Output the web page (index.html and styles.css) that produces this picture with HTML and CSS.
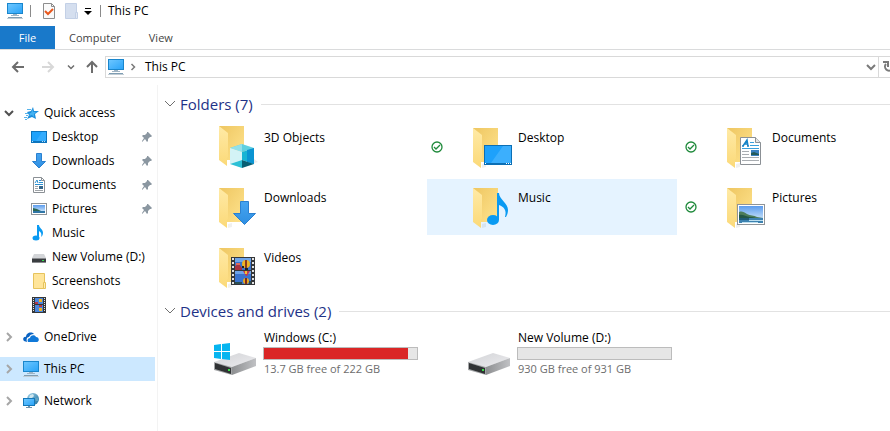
FILE: index.html
```
<!DOCTYPE html>
<html lang="en">

<head>
  <meta charset="UTF-8">
  <meta name="viewport" content="width=device-width, initial-scale=1.0">
  <title>This PC</title>
  <link rel="stylesheet" href="styles.css">
</head>

<body>
  <!-- shared icons -->
  <svg class="sprite" aria-hidden="true">
    <defs>
      <linearGradient id="screen" x1="0" y1="0" x2="1" y2="1">
        <stop offset="0" stop-color="#6cc6ff" />
        <stop offset="1" stop-color="#2ba4f8" />
      </linearGradient>
      <linearGradient id="folderBack" x1="0" y1="0" x2="1" y2="1">
        <stop offset="0" stop-color="#eec661" />
        <stop offset="1" stop-color="#ffe48f" />
      </linearGradient>
      <linearGradient id="folderFront" x1="0" y1="0" x2="0" y2="1">
        <stop offset="0" stop-color="#ffeaa6" />
        <stop offset="1" stop-color="#fbd978" />
      </linearGradient>
      <linearGradient id="sky" x1="0" y1="0" x2="0" y2="1">
        <stop offset="0" stop-color="#5b9cee" />
        <stop offset="1" stop-color="#e6f5fd" />
      </linearGradient>
      <linearGradient id="arrowFill" x1="0" y1="0" x2="0" y2="1">
        <stop offset="0" stop-color="#45a4f0" />
        <stop offset="1" stop-color="#2f8fe2" />
      </linearGradient>
      <linearGradient id="driveTop" x1="0" y1="0" x2="1" y2="1">
        <stop offset="0" stop-color="#d2d3d6" />
        <stop offset="1" stop-color="#ececef" />
      </linearGradient>
      <linearGradient id="driveSide" x1="0" y1="0" x2="1" y2="0">
        <stop offset="0" stop-color="#8d8f91" />
        <stop offset="1" stop-color="#c0c1c4" />
      </linearGradient>
      <linearGradient id="globe" x1="0" y1="0" x2="1" y2="1">
        <stop offset="0" stop-color="#9ccfe6" />
        <stop offset="1" stop-color="#1d6f9e" />
      </linearGradient>
    </defs>

    <symbol id="i-pc" viewBox="0 0 16 16">
      <path fill="#1a86cc" d="M0 0h16v11H0z" />
      <path fill="url(#screen)" d="M1 1h14v9H1z" />
      <path fill="#9fb4c4" d="M6 11h4v2H6zM4 12h8v1H4z" />
      <path fill="#7e9db3" d="M1 14h14v1H1z" />
      <path fill="#c2cdd5" d="M0 15h16v1H0z" />
    </symbol>
    <symbol id="i-folder" viewBox="0 0 48 48">
      <path fill="#000" opacity=".06" d="M14 45l4-1v-4l-4 1z" />
      <path fill="url(#folderBack)" d="M5 5h25v34H12z" />
      <path fill="url(#folderFront)" d="M5 5l9 7v24l-1 1v8l-8-6z" />
    </symbol>
    <symbol id="i-3d" viewBox="0 0 48 48">
      <path fill="url(#folderBack)" d="M5 3h25v34H12z" />
      <path fill="url(#folderFront)" d="M5 3l9 7v24l-1 1v8l-8-6z" />
      <path fill="#000" opacity=".08" d="M38 41l6-2-4-3z" />
      <path fill="#5fd0e0" d="M28 21l12 4-12 4-12-4z" />
      <path fill="#93e0ea" d="M16 25l12-4v8z" />
      <path fill="#d3f3f6" d="M16 25l12 4v8l-12 4z" />
      <path fill="#17b4d4" d="M28 29l12-4v16l-12-4z" />
      <path fill="#0a94d2" d="M40 25v16l-7-2V27z" />
      <path fill="#2cc0d6" d="M28 37v8l-12-4z" />
      <path fill="#075f74" d="M28 37l12 4-12 4z" />
    </symbol>
    <symbol id="i-desktop" viewBox="0 0 48 48">
      <use href="#i-folder" />
      <path fill="#0b6fb5" d="M16 22h28v20H16z" />
      <path fill="#1da1fb" d="M17 23h26v17H17z" />
      <path fill="#52b9ff" opacity=".6" d="M35 23h8v17H23z" />
      <path fill="#fff" d="M17 40h1v1h-1zM38 40h1v1h-1zM40 40h1v1h-1zM42 40h1v1h-1z" />
    </symbol>
    <symbol id="i-photo" viewBox="0 0 28 21">
      <path fill="#8f9498" d="M0 0h28v21H0z" />
      <path fill="#fff" d="M1 1h26v19H1z" />
      <path fill="url(#sky)" d="M2 2h24v17H2z" />
      <path fill="#4d7d5a" d="M2 8c3-1 5 0 8 2s7 1 10 3l6 1v1H2z" />
      <path fill="#235746" d="M2 11c4-1 7 2 11 2s6 1 8 2H2z" />
      <path fill="#3d82b0" d="M2 14h24v5H2z" />
      <path fill="#bcdff0" d="M12 16h14v1H12zM5 18h16v1H5z" />
      <path fill="#1f5a75" d="M2 14h10v2H2z" />
    </symbol>
    <symbol id="i-documents" viewBox="0 0 48 48">
      <use href="#i-folder" />
      <path fill="#fff" stroke="#8b9095" d="M18.500 14.500h15l5 5v22h-20z" />
      <path fill="#e4e6e8" stroke="#8b9095" d="M33.500 14.500v5h5" />
      <path fill="none" stroke="#1583c7" stroke-width="1.500" d="M21 23l4-6 1 6M22 21h4M20 23h2M25 23h2" />
      <path fill="#3ba0dc" d="M28 19h4v1h-4zM28 22h9v1h-9zM20 25h17v1H20z" />
      <path fill="#a9adb1" d="M20 28h7v1h-7zM20 31h7v1h-7zM20 34h17v1H20zM20 37h17v1H20z" />
      <path fill="#3a80bf" d="M29 27h8v6h-8z" />
      <path fill="#245a58" d="M29 30l3-1 5 2v1h-8z" />
    </symbol>
    <symbol id="i-downloads" viewBox="0 0 48 48">
      <use href="#i-folder" />
      <path fill="url(#arrowFill)" stroke="#2a80d0" d="M26.500 18.500h8v12h7l-11 11-11-11h7z" />
    </symbol>
    <symbol id="i-music" viewBox="0 0 48 48">
      <use href="#i-folder" />
      <ellipse cx="25" cy="37" rx="6" ry="5" fill="#0a9af2" />
      <path fill="#0a9af2" d="M29 10h2c0 6 9 10 9 17 0 3-1 5-2 7h-1c2-7-1-10-6-12v15h-2z" />
    </symbol>
    <symbol id="i-pictures" viewBox="0 0 48 48">
      <use href="#i-folder" />
      <use href="#i-photo" x="15" y="21" width="28" height="21" />
    </symbol>
    <symbol id="i-film" viewBox="0 0 24 28">
      <path fill="#35373a" d="M0 0h24v28H0z" />
      <path stroke="#e2e3e4" stroke-width="2" stroke-dasharray="2 2" d="M2 1v26M22 1v26" />
      <path fill="#3a74cf" d="M4 1h16v12H4zM4 14h16v13H4z" />
      <path fill="#6fa4e8" d="M4 1h16v4H4zM4 14h16v3H4z" />
      <path fill="#a8323f" d="M4 9l4-2 3 4v2H4z" />
      <path fill="#e06a5b" d="M5 6h4v2H5z" />
      <circle cx="15" cy="7" r="4" fill="#f0b323" />
      <path fill="#8a3a24" d="M14 3h2v8h-2z" />
      <path fill="#222" d="M14 11h3v2h-3zM11 9h2v2h-2z" />
      <path fill="#c33b52" d="M12 14h7l-3 5h-1z" />
      <path fill="#f2c330" d="M14 14h2v3h-2z" />
      <circle cx="15" cy="24" r="3" fill="#e8a91f" />
      <path fill="#7b2b21" d="M14 21h2v6h-2z" />
      <path fill="#2a4f55" d="M4 25h7v2H4zM18 24h2v3h-2z" />
    </symbol>
    <symbol id="i-videos" viewBox="0 0 48 48">
      <use href="#i-folder" />
      <use href="#i-film" x="17" y="14" width="24" height="28" />
    </symbol>
    <symbol id="i-drive" viewBox="0 0 48 48">
      <path fill="url(#driveTop)" d="M0 32l25-9 17 5-24 9z" />
      <path fill="url(#driveSide)" d="M18 37l24-9v8l-24 9z" />
      <path fill="#a4a6a8" d="M0 32l18 5v8L0 40z" />
      <path fill="#303234" d="M1 33l16 5v6L1 39z" />
      <path fill="#3be04a" d="M14 39h2v2h-2z" />
    </symbol>
    <symbol id="i-windrive" viewBox="0 0 48 48">
      <use href="#i-drive" />
      <path fill="#06b5f0" d="M0 15l7-1v7H0zM8 14l8-1v8H8zM0 22h7v7l-7-1zM8 22h8v8l-8-1z" />
    </symbol>

    <symbol id="s-star" viewBox="0 0 16 16">
      <path fill="#1c8fdc" d="M10 2l1 4 5 0-4 3 1 5-4-2-5 2 2-4-2-3 4-1z" />
      <path fill="#45b2f2" d="M10 4l0 3 3 0-2 2v3L9 10l-3 1 1-2-1-1h2z" />
      <path fill="#57b3ea" d="M4 4h4v1H4zM2 8h3v1H2zM3 10h2v1H3zM1 12h3v1H1zM2 14h2v1H2z" />
    </symbol>
    <symbol id="s-desktop" viewBox="0 0 16 16">
      <path fill="#0d74bd" d="M0 2h16v12H0z" />
      <path fill="#1fa2fb" d="M1 3h14v9H1z" />
      <path fill="#4cb5ff" d="M11 3h4v9H5z" opacity=".5" />
      <path fill="#b9e0f8" d="M1 12h1v1H1zM11 12h1v1h-1zM13 12h1v1h-1z" />
    </symbol>
    <symbol id="s-downloads" viewBox="0 0 16 16">
      <path fill="url(#arrowFill)" stroke="#2a80d0" d="M5.500 .5h5v8h4l-6.500 6.500L1.500 8.500h4z" />
    </symbol>
    <symbol id="s-documents" viewBox="0 0 16 16">
      <path fill="#fff" stroke="#8b9095" d="M2.500 .5h8l3 3v12h-11z" />
      <path fill="none" stroke="#8b9095" d="M10.500 .5v3h3" />
      <path fill="none" stroke="#2b90d2" d="M4 6l2-3 1 3" />
      <path fill="#2b90d2" d="M8 3h2v1H8zM8 5h4v1H8zM4 7h8v1H4z" />
      <path fill="#a0a4a8" d="M4 9h3v1H4zM4 11h3v1H4zM4 13h8v1H4z" />
      <path fill="#34658a" d="M8 9h4v3H8z" />
    </symbol>
    <symbol id="s-pictures" viewBox="0 0 16 16">
      <path fill="#8f9498" d="M0 2h16v12H0z" />
      <path fill="#fff" d="M1 3h14v10H1z" />
      <path fill="url(#sky)" d="M2 4h12v8H2z" />
      <path fill="#2b6652" d="M2 7l4 1 4 2 4 0v1H2z" />
      <path fill="#2f76a6" d="M2 10h12v2H2z" />
    </symbol>
    <symbol id="s-music" viewBox="0 0 16 16">
      <ellipse cx="5" cy="13" rx="3.500" ry="2.500" fill="#0a9af2" />
      <path fill="#0a9af2" d="M6 0h2c0 3 4 4 4 8 0 2-1 3-2 4 1-3 0-5-2-6v7H6z" />
    </symbol>
    <symbol id="s-drive" viewBox="0 0 16 16">
      <path fill="#d3d5d8" d="M3 5h10l2 4H1z" />
      <path fill="#3a3d40" d="M1 9h14v4H1z" />
      <path fill="#8a8c8f" d="M1 9h14v1H1zM1 13h14v1H1z" />
      <path fill="#33e24d" d="M11 11h2v1h-2z" />
    </symbol>
    <symbol id="s-folder" viewBox="0 0 16 16">
      <path fill="#ffe59a" stroke="#e6c35c" d="M2.500 .5h11v15h-11z" />
      <path fill="#ffedb5" stroke="#e6c35c" d="M12.500 9.500h2v6h-2z" />
    </symbol>
    <symbol id="s-videos" viewBox="0 0 16 16">
      <path fill="#35373a" d="M1 0h14v16H1z" />
      <path stroke="#e2e3e4" stroke-dasharray="1 1" d="M2.500 1v14M13.500 1v14" />
      <path fill="#4a86dc" d="M4 1h8v6H4zM4 8h8v7H4z" />
      <path fill="#f0b323" d="M8 2h3v3H8zM8 11h3v3H8z" />
      <path fill="#b5384a" d="M4 5h3v2H4zM8 8h3v2H8z" />
    </symbol>
    <symbol id="s-onedrive" viewBox="0 0 16 16">
      <path fill="#0a63c2" d="M1 12c-2-2 0-5 2-4 0-4 5-6 8-3-3 0-4 1-5 3-2 0-3 2-2 5z" />
      <path fill="#0f78d8" d="M5 13c-1-2 0-4 2-4 0-3 5-4 6-1 3 0 4 4 1 5z" />
    </symbol>
    <symbol id="s-network" viewBox="0 0 16 16">
      <circle cx="10" cy="6" r="6" fill="url(#globe)" />
      <path fill="#cfe6ee" d="M7 2l3-1 1 2-2 2-3 0z" />
      <path fill="#5fa3c4" d="M12 5l3 0 0 3-2 0z" />
      <path fill="#1478b9" d="M0 5h12v8H0z" />
      <path fill="url(#screen)" d="M1 6h10v6H1z" />
      <path fill="#6e93ac" d="M5 13h2v1H5zM3 14h6v1H3z" />
    </symbol>
    <symbol id="s-pin" viewBox="0 0 10 10">
      <path fill="#8b97a1" d="M6 0l4 4-1 1-1 0-2 2 0 2-1 1-2-3-3 3 0-1 2-3-2-2 1-1 2 0 2-2 0-1z" />
    </symbol>
    <symbol id="s-right" viewBox="0 0 8 10">
      <path fill="none" stroke="currentColor" stroke-width="2" d="M2 1l4 4-4 4" />
    </symbol>
    <symbol id="s-down" viewBox="0 0 10 8">
      <path fill="none" stroke="currentColor" stroke-width="2" d="M1 2l4 4 4-4" />
    </symbol>
    <symbol id="s-group" viewBox="0 0 12 8">
      <path fill="none" stroke="#6f6f6f" d="M1 1l5 5 5-5" />
    </symbol>
    <symbol id="s-back" viewBox="0 0 14 12">
      <path fill="none" stroke="currentColor" stroke-width="2" d="M13 6H2M7 1L2 6l5 5" />
    </symbol>
    <symbol id="s-synced" viewBox="0 0 12 12">
      <circle cx="6" cy="6" r="5" fill="#fff" stroke="#1f8a3b" stroke-width="1.300" />
      <path fill="none" stroke="#1f8a3b" stroke-width="1.300" d="M3 6l2 2 4-4" />
    </symbol>
  </svg>

  <header class="title-bar">
    <svg class="icon"><use href="#i-pc" /></svg>
    <span class="divider"></span>
    <button class="quick-button" aria-label="Properties">
      <svg class="icon" viewBox="0 0 16 16">
        <path fill="#fafafa" stroke="#8d8d8d" d="M2.500 .5h8l3 3v12h-11z" />
        <path fill="none" stroke="#8d8d8d" d="M10.500 .5v3h3" />
        <path fill="none" stroke="#e8571c" stroke-width="2" d="M4 8l3 3 5-5" />
      </svg>
    </button>
    <button class="quick-button" aria-label="New folder">
      <svg class="icon" viewBox="0 0 16 16">
        <path fill="#d5dfef" stroke="#c3d0e6" d="M2.500 .5h11v15h-11z" />
        <path fill="#e1e8f4" stroke="#c3d0e6" d="M12.500 9.500h2v6h-2z" />
      </svg>
    </button>
    <button class="quick-button quick-more" aria-label="Customize Quick Access Toolbar">
      <svg width="8" height="8" viewBox="0 0 8 8">
        <path d="M1 1h6v1H1zM0 4h8L4 8z" />
      </svg>
    </button>
    <span class="divider"></span>
    <h1>This PC</h1>
  </header>

  <nav class="tabs">
    <button class="tab active">File</button>
    <button class="tab">Computer</button>
    <button class="tab">View</button>
  </nav>

  <div class="nav-bar">
    <button class="nav-button" aria-label="Back"><svg width="14" height="12"><use href="#s-back" /></svg></button>
    <button class="nav-button forward" aria-label="Forward"><svg width="14" height="12" viewBox="0 0 14 12">
        <path fill="none" stroke="currentColor" stroke-width="2" d="M1 6h11M7 1l5 5-5 5" />
      </svg></button>
    <button class="nav-button recent" aria-label="Recent locations"><svg width="8" height="6"><use href="#s-down" /></svg></button>
    <button class="nav-button up" aria-label="Up"><svg width="12" height="14" viewBox="0 0 12 14">
        <path fill="none" stroke="currentColor" stroke-width="2" d="M6 13V2M1 7l5-5 5 5" />
      </svg></button>
    <div class="address">
      <svg class="icon"><use href="#i-pc" /></svg>
      <svg class="crumb-arrow" width="6" height="8"><use href="#s-right" /></svg>
      <button class="crumb">This PC</button>
      <button class="address-drop" aria-label="Previous locations"><svg width="10" height="8"><use href="#s-down" /></svg></button>
    </div>
    <button class="refresh" aria-label="Refresh">
      <svg width="12" height="12" viewBox="0 0 12 12">
        <path fill="none" stroke="currentColor" stroke-width="2" d="M3 3a4 4 0 1 0 6 0M0 1h5v5" />
      </svg>
    </button>
  </div>

  <div class="content">
    <aside class="sidebar">
      <div class="row">
        <button class="toggle open" aria-label="Collapse Quick access"><svg width="10" height="8"><use href="#s-down" /></svg></button>
        <a href="#"><svg class="icon"><use href="#s-star" /></svg>Quick access</a>
      </div>
      <div class="row child"><a href="#"><svg class="icon"><use href="#s-desktop" /></svg>Desktop</a><svg class="pin"><use href="#s-pin" /></svg></div>
      <div class="row child"><a href="#"><svg class="icon"><use href="#s-downloads" /></svg>Downloads</a><svg class="pin"><use href="#s-pin" /></svg></div>
      <div class="row child"><a href="#"><svg class="icon"><use href="#s-documents" /></svg>Documents</a><svg class="pin"><use href="#s-pin" /></svg></div>
      <div class="row child"><a href="#"><svg class="icon"><use href="#s-pictures" /></svg>Pictures</a><svg class="pin"><use href="#s-pin" /></svg></div>
      <div class="row child"><a href="#"><svg class="icon"><use href="#s-music" /></svg>Music</a></div>
      <div class="row child"><a href="#"><svg class="icon"><use href="#s-drive" /></svg>New Volume (D:)</a></div>
      <div class="row child"><a href="#"><svg class="icon"><use href="#s-folder" /></svg>Screenshots</a></div>
      <div class="row child"><a href="#"><svg class="icon"><use href="#s-videos" /></svg>Videos</a></div>

      <div class="row root">
        <button class="toggle" aria-label="Expand OneDrive"><svg width="8" height="10"><use href="#s-right" /></svg></button>
        <a href="#"><svg class="icon"><use href="#s-onedrive" /></svg>OneDrive</a>
      </div>
      <div class="row root selected">
        <button class="toggle" aria-label="Expand This PC"><svg width="8" height="10"><use href="#s-right" /></svg></button>
        <a href="#"><svg class="icon"><use href="#i-pc" /></svg>This PC</a>
      </div>
      <div class="row root">
        <button class="toggle" aria-label="Expand Network"><svg width="8" height="10"><use href="#s-right" /></svg></button>
        <a href="#"><svg class="icon"><use href="#s-network" /></svg>Network</a>
      </div>
    </aside>

    <main>
      <section class="group">
        <h2><svg width="12" height="8"><use href="#s-group" /></svg>Folders (7)</h2>
        <div class="items">
          <a class="item" href="#"><span class="status"></span><svg class="thumb"><use href="#i-3d" /></svg><span class="name">3D Objects</span></a>
          <a class="item" href="#"><span class="status"><svg width="12" height="12"><use href="#s-synced" /></svg></span><svg class="thumb"><use href="#i-desktop" /></svg><span class="name">Desktop</span></a>
          <a class="item" href="#"><span class="status"><svg width="12" height="12"><use href="#s-synced" /></svg></span><svg class="thumb"><use href="#i-documents" /></svg><span class="name">Documents</span></a>
          <a class="item" href="#"><span class="status"></span><svg class="thumb"><use href="#i-downloads" /></svg><span class="name">Downloads</span></a>
          <a class="item hovered" href="#"><span class="status"></span><svg class="thumb"><use href="#i-music" /></svg><span class="name">Music</span></a>
          <a class="item" href="#"><span class="status"><svg width="12" height="12"><use href="#s-synced" /></svg></span><svg class="thumb"><use href="#i-pictures" /></svg><span class="name">Pictures</span></a>
          <a class="item" href="#"><span class="status"></span><svg class="thumb"><use href="#i-videos" /></svg><span class="name">Videos</span></a>
        </div>
      </section>

      <section class="group">
        <h2><svg width="12" height="8"><use href="#s-group" /></svg>Devices and drives (2)</h2>
        <div class="items">
          <a class="item" href="#">
            <span class="status"></span>
            <svg class="thumb"><use href="#i-windrive" /></svg>
            <span class="drive">
              <span class="drive-name">Windows (C:)</span>
              <span class="usage"><span class="used full" style="width: 94%"></span></span>
              <span class="free">13.7 GB free of 222 GB</span>
            </span>
          </a>
          <a class="item" href="#">
            <span class="status"></span>
            <svg class="thumb"><use href="#i-drive" /></svg>
            <span class="drive">
              <span class="drive-name">New Volume (D:)</span>
              <span class="usage"><span class="used" style="width: 0%"></span></span>
              <span class="free">930 GB free of 931 GB</span>
            </span>
          </a>
        </div>
      </section>
    </main>
  </div>
</body>

</html>
```

FILE: styles.css
```
* {
  box-sizing: border-box;
}

body {
  margin: 0;
  min-height: 100vh;
  display: flex;
  flex-direction: column;
  overflow-x: hidden;
  background: #fff;
  color: #000;
  font-family: "Segoe UI", "Open Sans", "Noto Sans", sans-serif;
  font-size: 12px;
  line-height: 16px;
}

button {
  margin: 0;
  padding: 0;
  border: 0;
  background: none;
  color: inherit;
  font: inherit;
}

a {
  color: inherit;
  text-decoration: none;
}

svg {
  display: block;
  flex-shrink: 0;
}

.sprite {
  position: absolute;
  width: 0;
  height: 0;
}

.icon {
  width: 16px;
  height: 16px;
}

/* Title bar */
.title-bar {
  display: flex;
  align-items: center;
  height: 26px;
  padding: 0 7px 4px;
}

.title-bar h1 {
  margin: 0;
  font-size: 12px;
  font-weight: normal;
}

.divider {
  width: 1px;
  height: 12px;
  margin: 0 7px;
  background: #8a8a8a;
}

.quick-button {
  display: flex;
  justify-content: center;
  width: 22px;
}

.quick-more {
  width: 11px;
}

/* Ribbon tabs */
.tabs {
  display: flex;
  height: 24px;
  border-bottom: 1px solid #dadbdc;
  font-size: 11px;
}

.tab {
  padding: 0 14px;
  color: #444;
}

.tab.active {
  width: 55px;
  background: #1979ca;
  color: #fff;
}

/* Navigation bar */
.nav-bar {
  display: flex;
  align-items: center;
  height: 35px;
  padding: 0 0 1px 3px;
  overflow: hidden;
}

.nav-button {
  display: flex;
  justify-content: center;
  width: 30px;
  color: #6d6d6d;
}

.nav-button.forward {
  color: #d8d8d8;
}

.nav-button.recent {
  width: 16px;
}

.nav-button.up {
  width: 26px;
}

.address {
  flex: 1;
  display: flex;
  align-items: center;
  height: 22px;
  padding-left: 2px;
  border: 1px solid #d9d9d9;
}

.crumb-arrow {
  margin: 0 9px 0 6px;
  color: #7a7a7a;
}

.address-drop {
  margin-left: auto;
  padding: 0 2px;
  color: #7a7a7a;
}

.refresh {
  width: 26px;
  height: 22px;
  margin-right: -15px;
  padding-left: 4px;
  border: 1px solid #d9d9d9;
  border-left: 0;
  color: #7a7a7a;
}

.content {
  flex: 1;
  display: flex;
}

/* Sidebar tree */
.sidebar {
  flex-shrink: 0;
  width: 158px;
  padding: 16px 2px 0 0;
  border-right: 1px solid #f3f3f3;
}

.row {
  display: flex;
  align-items: center;
  height: 24px;
  padding-right: 3px;
}

.row a {
  flex: 1;
  display: flex;
  align-items: center;
  gap: 5px;
  white-space: nowrap;
}

.row.child {
  padding-left: 31px;
}

.row.root {
  margin-top: 8px;
}

.row.selected {
  background: #cce8ff;
}

.toggle {
  display: flex;
  justify-content: center;
  width: 18px;
  margin-right: 5px;
  color: #a6a6a6;
}

.toggle.open {
  color: #505050;
}

.pin {
  width: 10px;
  height: 10px;
}

/* Groups */
main {
  flex: 1;
  min-width: 0;
  padding-top: 11px;
  overflow: hidden;
}

.group {
  margin-bottom: 8px;
}

.group h2 {
  display: flex;
  align-items: center;
  height: 16px;
  margin: 0 0 7px;
  padding-left: 6px;
  color: #1e3287;
  font-size: 15px;
  font-weight: normal;
  line-height: 18px;
}

.group h2 svg {
  margin-right: 4px;
}

.group h2::after {
  content: "";
  flex: 1;
  height: 1px;
  margin-left: 8px;
  background: #e2e2e2;
}

.items {
  display: grid;
  grid-template-columns: repeat(3, 250px);
  gap: 4px;
  padding-left: 15px;
}

.item {
  display: flex;
  height: 56px;
}

.item.hovered {
  background: #e5f3ff;
}

.status {
  width: 41px;
  padding: 22px 0 0 4px;
}

.thumb {
  width: 48px;
  height: 48px;
  margin-top: 4px;
}

.name {
  padding: 11px 0 0 2px;
}

.drive {
  display: flex;
  flex-direction: column;
  gap: 1px;
  width: 156px;
  padding: 4px 0 0 1px;
}

.drive-name,
.free {
  padding-left: 1px;
  white-space: nowrap;
}

.free {
  color: #6d6d6d;
  font-size: 11px;
}

.usage {
  height: 13px;
  border: 1px solid #bcbcbc;
  background: #e6e6e6;
}

.used {
  display: block;
  height: 100%;
  background: #26a0da;
}

.used.full {
  background: #da2626;
}
```
